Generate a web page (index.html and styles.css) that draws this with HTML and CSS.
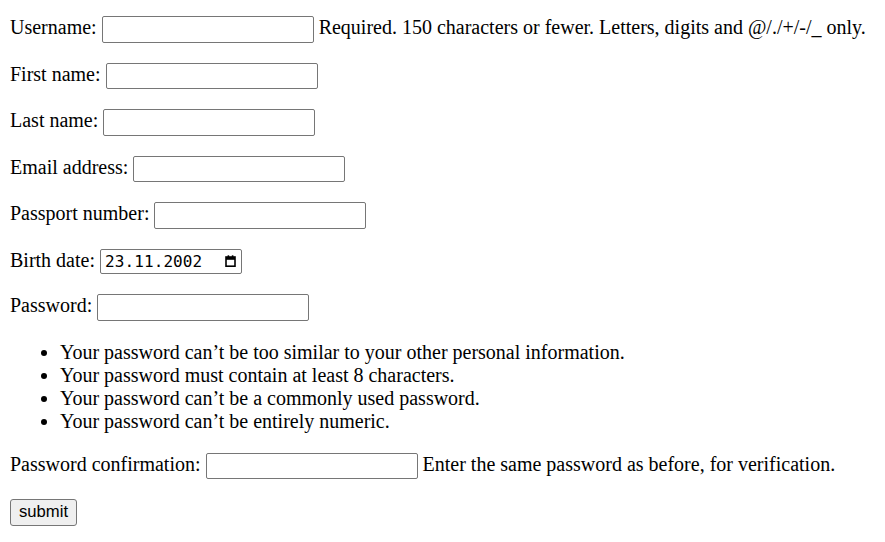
FILE: index.html
```html
<!DOCTYPE html>
<html lang="en">
<head>
<meta charset="utf-8">
<title>Sign up</title>
<link rel="stylesheet" href="styles.css">
</head>
<body>
<form class="signup">
  <p class="row"><label for="id_username">Username:</label> <input type="text" id="id_username" class="field"> <span class="helptext">Required. 150 characters or fewer. Letters, digits and @/./+/-/_ only.</span></p>
  <p class="row"><label for="id_first_name">First name:</label> <input type="text" id="id_first_name" class="field"></p>
  <p class="row"><label for="id_last_name">Last name:</label> <input type="text" id="id_last_name" class="field"></p>
  <p class="row"><label for="id_email">Email address:</label> <input type="text" id="id_email" class="field"></p>
  <p class="row"><label for="id_passport">Passport number:</label> <input type="text" id="id_passport" class="field"></p>
  <p class="row row-date"><label>Birth date:</label><span class="date-field"><span class="date-value">23.11.2002</span><svg class="cal-icon" width="11" height="12" viewBox="0 0 11 12"><rect x="1" y="2" width="9" height="9.2" fill="none" stroke="#000" stroke-width="1.6"/><rect x="1" y="2" width="9" height="2.8" fill="#000"/><rect x="2.6" y="0.3" width="1.6" height="2" fill="#000"/><rect x="6.8" y="0.3" width="1.6" height="2" fill="#000"/></svg></span></p>
  <p class="row"><label for="id_password1">Password:</label> <input type="password" id="id_password1" class="field"></p>
  <ul class="pw-rules">
    <li>Your password can’t be too similar to your other personal information.</li>
    <li>Your password must contain at least 8 characters.</li>
    <li>Your password can’t be a commonly used password.</li>
    <li>Your password can’t be entirely numeric.</li>
  </ul>
  <p class="row"><label for="id_password2">Password confirmation:</label> <input type="password" id="id_password2" class="field"> <span class="helptext">Enter the same password as before, for verification.</span></p>
  <p class="row"><button type="button" class="submit">submit</button></p>
</form>
</body>
</html>
```
FILE: styles.css
```css
html, body {
  background: #fff;
}
body {
  margin: 0;
  padding: 16px 10px 10px;
  font-family: "Liberation Serif", "Times New Roman", serif;
  font-size: 20px;
  color: #000;
}
.signup {
  display: flex;
  flex-direction: column;
  gap: 20px;
}
.row {
  margin: 0;
  white-space: nowrap;
}
.field {
  box-sizing: border-box;
  width: 212px;
  height: 26.6px;
  margin: 0;
  padding: 1px 2px;
  border: 1px solid #767676;
  border-radius: 2px;
  background: #fff;
  font-family: "Liberation Sans", Arial, sans-serif;
  font-size: 16.67px;
  vertical-align: baseline;
}
.row-date label {
  margin-right: 5px;
}
.date-field {
  display: inline-flex;
  align-items: center;
  box-sizing: border-box;
  width: 142px;
  height: 25px;
  padding: 0 5px 0 4px;
  border: 1px solid #767676;
  border-radius: 2px;
  font-family: "DejaVu Sans Mono", "Liberation Mono", monospace;
  font-size: 16px;
  vertical-align: baseline;
}
.date-value {
  flex: 1;
  letter-spacing: 0.1px;
}
.cal-icon {
  display: block;
  margin-top: -1px;
}
.pw-rules {
  margin: 0;
  padding-left: 50px;
  line-height: 23px;
}
.submit {
  box-sizing: border-box;
  width: 67px;
  height: 26.5px;
  margin: 0;
  padding: 0;
  border: 1px solid #767676;
  border-radius: 3px;
  background: #efefef;
  color: #000;
  font-family: "Liberation Sans", Arial, sans-serif;
  font-size: 16.67px;
  vertical-align: baseline;
}
```
